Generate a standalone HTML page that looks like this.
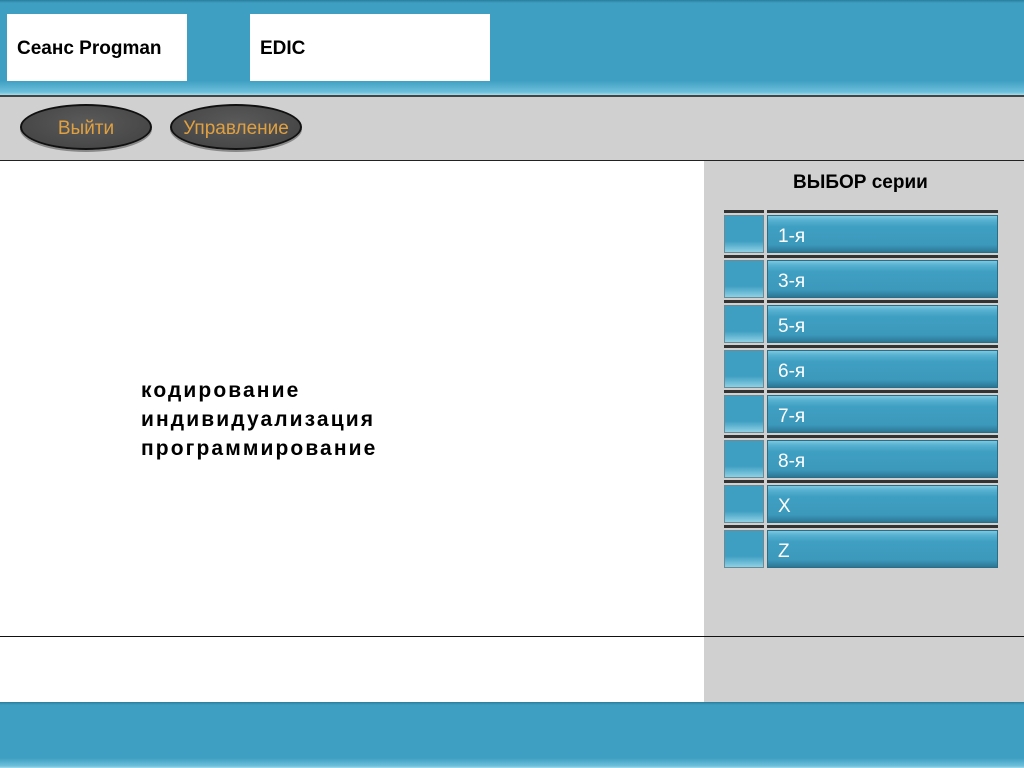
<!DOCTYPE html>
<html><head><meta charset="utf-8"><style>
*{margin:0;padding:0;box-sizing:border-box}
body{width:1024px;height:768px;position:relative;overflow:hidden;background:#fff;font-family:"Liberation Sans",sans-serif}
.blue{background:linear-gradient(#2a7d9c 0,#3f9fc2 3px,#3f9fc2 85%,#6cc0dc 97%,#a8dcea 100%)}
.abs{position:absolute}
.box{background:#fff;font-weight:bold;font-size:19px;padding-left:10px;display:flex;align-items:center;padding-top:2px}
.pill{position:absolute;top:104px;width:132px;height:46px;border-radius:50%;background:radial-gradient(ellipse at 50% 40%,#5a5a5a,#404040);border:2px solid #111;box-shadow:0 2px 0 #888;color:#e0a040;font-size:19px;display:flex;align-items:center;justify-content:center;padding-top:3px}
.row{position:absolute;left:724px;width:274px;height:43px}
.row .ln{position:absolute;top:0;height:3px;background:#333}
.sq{position:absolute;left:0;top:5px;width:40px;height:38px;background:linear-gradient(#3f9fc2 0,#3f9fc2 70%,#8fd0e4 100%);border:1px solid #6a8a96}
.bt{position:absolute;left:43px;top:5px;width:231px;height:38px;background:linear-gradient(#7fc8e0 0,#56b0d0 12%,#3f9fc2 30%,#3c99bc 80%,#2c7694 100%);border:1px solid #2a6d86;color:#fff;font-size:19px;padding-left:10px;line-height:42px}
.txt{font-size:21px;font-weight:bold;line-height:29px;color:#000;letter-spacing:2.1px}
</style></head><body>
<div class="abs blue" style="left:0;top:0;width:1024px;height:95px"></div>
<div class="abs box" style="left:7px;top:14px;width:180px;height:67px">Сеанс Progman</div>
<div class="abs box" style="left:250px;top:14px;width:240px;height:67px">EDIC</div>
<div class="abs" style="left:0;top:95px;width:1024px;height:66px;background:#d0d0d0;border-top:2px solid #444;border-bottom:1px solid #222"></div>
<div class="pill" style="left:20px">Выйти</div>
<div class="pill" style="left:170px">Управление</div>
<div class="abs" style="left:704px;top:161px;width:320px;height:541px;background:#d0d0d0"></div>
<div class="abs" style="left:0;top:636px;width:1024px;height:1px;background:#111"></div>
<div class="abs" style="left:793px;top:172px;font-weight:bold;font-size:19px">ВЫБОР серии</div>
<div class="abs txt" style="left:141px;top:376px">кодирование<br>индивидуализация<br>программирование</div>
<div class="row" style="top:210px"><div class="ln" style="left:0;width:40px"></div><div class="ln" style="left:43px;width:231px"></div><div class="sq"></div><div class="bt">1-я</div></div>
<div class="row" style="top:255px"><div class="ln" style="left:0;width:40px"></div><div class="ln" style="left:43px;width:231px"></div><div class="sq"></div><div class="bt">3-я</div></div>
<div class="row" style="top:300px"><div class="ln" style="left:0;width:40px"></div><div class="ln" style="left:43px;width:231px"></div><div class="sq"></div><div class="bt">5-я</div></div>
<div class="row" style="top:345px"><div class="ln" style="left:0;width:40px"></div><div class="ln" style="left:43px;width:231px"></div><div class="sq"></div><div class="bt">6-я</div></div>
<div class="row" style="top:390px"><div class="ln" style="left:0;width:40px"></div><div class="ln" style="left:43px;width:231px"></div><div class="sq"></div><div class="bt">7-я</div></div>
<div class="row" style="top:435px"><div class="ln" style="left:0;width:40px"></div><div class="ln" style="left:43px;width:231px"></div><div class="sq"></div><div class="bt">8-я</div></div>
<div class="row" style="top:480px"><div class="ln" style="left:0;width:40px"></div><div class="ln" style="left:43px;width:231px"></div><div class="sq"></div><div class="bt">X</div></div>
<div class="row" style="top:525px"><div class="ln" style="left:0;width:40px"></div><div class="ln" style="left:43px;width:231px"></div><div class="sq"></div><div class="bt">Z</div></div>
<div class="abs blue" style="left:0;top:702px;width:1024px;height:66px"></div>
</body></html>
